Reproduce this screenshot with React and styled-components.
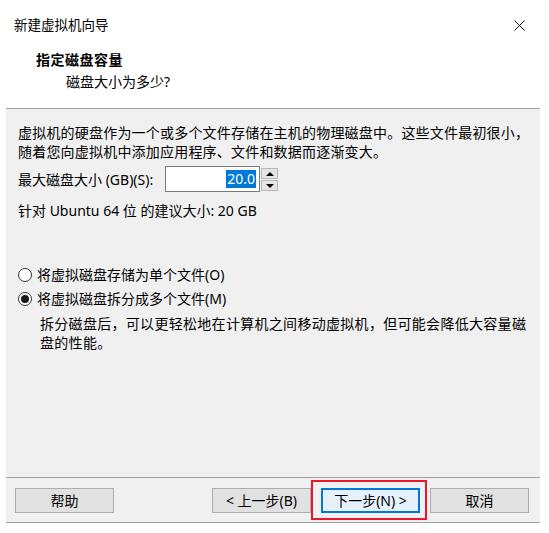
import styled, { createGlobalStyle } from "styled-components";

const GlobalStyle = createGlobalStyle`
	html, body {
		margin: 0;
		padding: 0;
		background: #ffffff;
	}
	body {
		font-family: "Noto Sans", "Noto Sans CJK SC", sans-serif;
		font-size: 14px;
		color: #000000;
	}
	* {
		box-sizing: border-box;
	}
`;

const App = () => {
	return (
		<>
			<GlobalStyle />
			<Window>
				<TitleBar>
					<Title>新建虚拟机向导</Title>
					<CloseButton aria-label="关闭">
						<svg width="11" height="11" viewBox="0 0 11 11">
							<path d="M0.5 0.5 L10.5 10.5 M10.5 0.5 L0.5 10.5" stroke="#111" strokeWidth="1" fill="none" />
						</svg>
					</CloseButton>
				</TitleBar>

				<Header>
					<Heading>指定磁盘容量</Heading>
					<SubHeading>磁盘大小为多少?</SubHeading>
				</Header>

				<Body>
					<Content>
						<Paragraph>
							虚拟机的硬盘作为一个或多个文件存储在主机的物理磁盘中。这些文件最初很小，
							<br />
							随着您向虚拟机中添加应用程序、文件和数据而逐渐变大。
						</Paragraph>

						<DiskRow>
							<DiskLabel>最大磁盘大小 (GB)(S):</DiskLabel>
							<SpinBox>
								<SpinField>
									<Selected>20.0</Selected>
								</SpinField>
								<Spinner>
									<SpinButton $dir="up" />
									<SpinButton $dir="down" />
								</Spinner>
							</SpinBox>
						</DiskRow>

						<Hint>针对 Ubuntu 64 位 的建议大小: 20 GB</Hint>

						<RadioGroup>
							<RadioRow>
								<Radio />
								<span>将虚拟磁盘存储为单个文件(O)</span>
							</RadioRow>
							<RadioRow>
								<Radio $checked />
								<span>将虚拟磁盘拆分成多个文件(M)</span>
							</RadioRow>
							<Description>
								拆分磁盘后，可以更轻松地在计算机之间移动虚拟机，但可能会降低大容量磁
								<br />
								盘的性能。
							</Description>
						</RadioGroup>
					</Content>

					<Footer>
						<Button>帮助</Button>
						<NavButtons>
							<Button>&lt; 上一步(B)</Button>
							<Highlight>
								<Button $primary>下一步(N) &gt;</Button>
							</Highlight>
							<Button>取消</Button>
						</NavButtons>
					</Footer>
				</Body>
			</Window>
		</>
	);
};

export default App;

const Window = styled.div`
	width: 549px;
	height: 533px;
	display: flex;
	flex-direction: column;
	background: #ffffff;
	overflow: hidden;
`;

const TitleBar = styled.div`
	height: 50px;
	flex-shrink: 0;
	display: flex;
	align-items: center;
	justify-content: space-between;
	padding: 0 24px 0 14px;
`;

const Title = styled.div`
	font-size: 13.5px;
	line-height: 20px;
	color: #000;
`;

const CloseButton = styled.div`
	width: 11px;
	height: 11px;
	display: flex;
`;

const Header = styled.div`
	height: 58px;
	flex-shrink: 0;
	padding-left: 36px;
`;

const Heading = styled.div`
	font-weight: 700;
	line-height: 20px;
	letter-spacing: 0.5px;
`;

const SubHeading = styled.div`
	margin-top: 2px;
	padding-left: 30px;
	line-height: 20px;
`;

const Body = styled.div`
	flex: 1;
	display: flex;
	flex-direction: column;
	margin: 0 9px 10px 6px;
	background: #f0f0f0;
	border-top: 1px solid #a0a0a0;
	border-bottom: 1px solid #a0a0a0;
`;

const Content = styled.div`
	flex: 1;
	padding: 14px 0 0 12px;
`;

const Paragraph = styled.p`
	margin: 0;
	line-height: 19px;
	white-space: nowrap;
	letter-spacing: 0.2px;
`;

const DiskRow = styled.div`
	margin-top: 5px;
	height: 26px;
	display: flex;
	align-items: center;
`;

const DiskLabel = styled.span`
	width: 147px;
	white-space: nowrap;
`;

const SpinBox = styled.div`
	display: flex;
	height: 26px;
`;

const SpinField = styled.div`
	width: 95px;
	height: 26px;
	display: flex;
	align-items: center;
	justify-content: flex-end;
	padding-right: 3px;
	background: #ffffff;
	border: 1px solid #7a7a7a;
`;

const Selected = styled.span`
	background: #0078d7;
	color: #ffffff;
	line-height: 18px;
	padding: 0 1px;
`;

const Spinner = styled.div`
	width: 18px;
	height: 26px;
	display: flex;
	flex-direction: column;
	gap: 1px;
	padding: 2px 0 1px 1px;
`;

const SpinButton = styled.div`
	flex: 1;
	background: #e5e5e5;
	border: 1px solid #b8b8b8;
	display: flex;
	align-items: center;
	justify-content: center;

	&::before {
		content: "";
		width: 0;
		height: 0;
		border-left: 4px solid transparent;
		border-right: 4px solid transparent;
		${({ $dir }) =>
			$dir === "up" ? "border-bottom: 4px solid #000;" : "border-top: 4px solid #000;"}
	}
`;

const Hint = styled.div`
	margin-top: 9px;
	line-height: 19px;
`;

const RadioGroup = styled.div`
	margin-top: 45px;
	display: flex;
	flex-direction: column;
	gap: 5px;
`;

const RadioRow = styled.div`
	display: flex;
	align-items: center;
	gap: 5px;
	line-height: 19px;
`;

const Radio = styled.span`
	width: 14px;
	height: 14px;
	border-radius: 50%;
	border: 1px solid #333333;
	background: #ffffff;
	display: flex;
	align-items: center;
	justify-content: center;

	&::after {
		content: "";
		width: 8px;
		height: 8px;
		border-radius: 50%;
		background: ${({ $checked }) => ($checked ? "#1a1a1a" : "transparent")};
	}
`;

const Description = styled.div`
	margin-top: 1px;
	padding-left: 22px;
	line-height: 19px;
	white-space: nowrap;
	letter-spacing: 0.3px;
`;

const Footer = styled.div`
	display: flex;
	justify-content: space-between;
	padding: 10px 11px 9px 9px;
	border-top: 1px solid #a0a0a0;
`;

const NavButtons = styled.div`
	display: flex;
	gap: 10px;
`;

const Highlight = styled.div`
	position: relative;
	display: flex;

	&::after {
		content: "";
		position: absolute;
		left: -10px;
		right: -7px;
		top: -8px;
		bottom: -7px;
		border: 2px solid #e8172c;
		pointer-events: none;
	}
`;

const Button = styled.button`
	width: 99px;
	height: 25px;
	padding: 0;
	font-family: "Noto Sans", "Noto Sans CJK SC", sans-serif;
	font-size: 14px;
	line-height: 20px;
	color: #000000;
	background: ${({ $primary }) => ($primary ? "#e5f1fb" : "#e1e1e1")};
	border: 1px solid ${({ $primary }) => ($primary ? "#0078d7" : "#adadad")};
	box-shadow: ${({ $primary }) => ($primary ? "inset 0 0 0 1px #0078d7" : "none")};
	cursor: default;
`;
